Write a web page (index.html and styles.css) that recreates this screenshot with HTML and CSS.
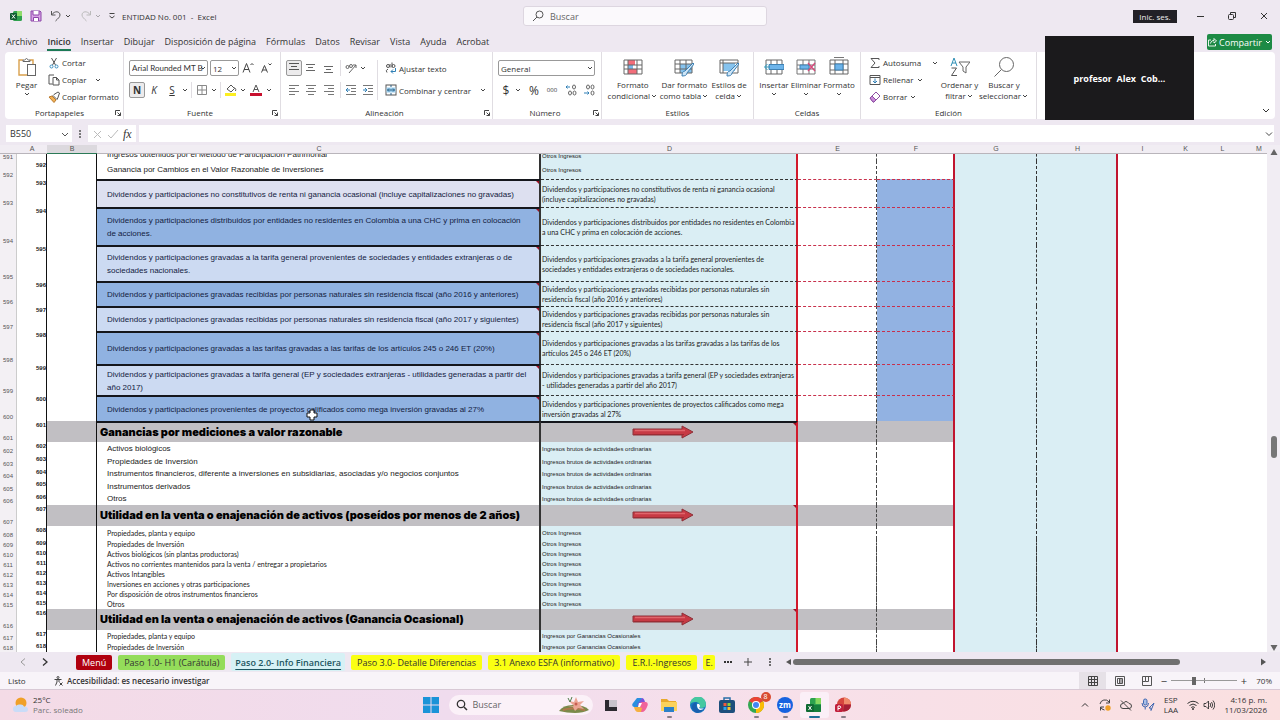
FILE: index.html
```html
<!DOCTYPE html>
<html lang="es">
<head>
<meta charset="utf-8">
<title>ENTIDAD No. 001 - Excel</title>
<link rel="stylesheet" href="styles.css">
</head>
<body>
<svg class="sprite" aria-hidden="true">
  <symbol id="chev" viewBox="0 0 8 8"><path d="M2 3l2 2 2-2" fill="none" stroke="#444" stroke-width="1"/></symbol>
  <symbol id="launch" viewBox="0 0 8 8"><path d="M1.500 6V1.500H6M3.500 3.500l3 3M6.500 3.500v3h-3" fill="none" stroke="#444"/></symbol>
  <symbol id="arrow" viewBox="0 0 62 14"><path d="M1 4h49V1l11 6-11 6v-3H1z" fill="#c73a44" stroke="#8d3038"/><path d="M3 5.500h50" stroke="#e0666c" stroke-width="1.500"/><path d="M2 9.500h50" stroke="#9c2c34"/></symbol>
</svg>

<header class="titlebar">
  <div class="quick">
    <svg class="i12" viewBox="0 0 12 12"><rect x="3" y="1" width="9" height="10" rx="1.500" fill="#2fa14f"/><path d="M7 1h4q1 0 1 1v4H7z" fill="#8fdc6b"/><rect x="0" y="3" width="7" height="7" rx="1" fill="#0f5c30"/><path d="M2 4.500l3 4M5 4.500l-3 4" stroke="#fff"/></svg>
    <button aria-label="Guardar"><svg class="i12" viewBox="0 0 12 12"><path d="M1 1h9l1 1v9H1z" fill="#d9a3e6" stroke="#8b45a8"/><path d="M3 1v4h6V1M3.500 11V7.500h5V11" fill="#fff" stroke="#8b45a8"/></svg></button>
    <button aria-label="Deshacer"><svg class="i12" viewBox="0 0 12 12"><path d="M1.500 1v4h4M1.500 5C5 0 10 1.500 10 5c0 2-2 3.500-4.500 6" fill="none" stroke="#555"/></svg></button>
    <svg class="i8"><use href="#chev"/></svg>
    <button aria-label="Rehacer"><svg class="i12" viewBox="0 0 12 12"><path d="M10.500 1v4h-4M10.500 5C7 0 2 1.500 2 5c0 2 2 3.500 4.500 6" fill="none" stroke="#bbb"/></svg></button>
    <svg class="i8 faded"><use href="#chev"/></svg>
    <svg class="i8" viewBox="0 0 8 8"><path d="M1.500 1.500h5" stroke="#444"/><path d="M1.500 4l2.500 2 2.500-2" fill="none" stroke="#444"/></svg>
    <h1>ENTIDAD No. 001&nbsp; -&nbsp; Excel</h1>
  </div>
  <label class="search"><svg class="i12" viewBox="0 0 12 12"><circle cx="7.500" cy="4.500" r="3.500" fill="none" stroke="#555"/><path d="M5 7L1 11" stroke="#555"/></svg><input type="text" placeholder="Buscar" aria-label="Buscar"></label>
  <div class="winctl">
    <button class="signin">Inic. ses.</button>
    <button aria-label="Minimizar"><svg class="i10" viewBox="0 0 10 10"><path d="M2 5.500h7" stroke="#333"/></svg></button>
    <button aria-label="Restaurar"><svg class="i10" viewBox="0 0 10 10"><rect x="1.500" y="3.500" width="5" height="5" rx="1" fill="none" stroke="#333"/><path d="M3.500 3V1.500h5v5H7" fill="none" stroke="#333"/></svg></button>
    <button aria-label="Cerrar"><svg class="i10" viewBox="0 0 10 10"><path d="M2 2l6 6M8 2l-6 6" stroke="#333"/></svg></button>
  </div>
</header>

<nav class="tabs">
  <button>Archivo</button><button class="on">Inicio</button><button>Insertar</button><button>Dibujar</button><button>Disposición de página</button><button>Fórmulas</button><button>Datos</button><button>Revisar</button><button>Vista</button><button>Ayuda</button><button>Acrobat</button>
  <button class="share"><svg class="i10" viewBox="0 0 10 10"><path d="M4 3H1.500v6h7V7M3.500 6.500C4 4 5.500 3.500 7 3.500V1.500L9.500 4 7 6V4.500" fill="none" stroke="#fff" stroke-width=".9"/></svg>Compartir<svg class="i8" viewBox="0 0 8 8"><path d="M2 3l2 2 2-2" fill="none" stroke="#fff"/></svg></button>
</nav>

<section class="ribbon" aria-label="Cinta de opciones">
  <div class="group g-clip">
    <div class="body">
      <button class="big w44"><svg class="i20" viewBox="0 0 20 20"><path d="M6 3H2v15h8M13 3h3v4" fill="none" stroke="#d9a04c" stroke-width="1.400"/><path d="M6 4.500V3h1.500q2-3 4 0H13v1.500z" fill="#fff" stroke="#666"/><rect x="10.500" y="7.500" width="8" height="11" fill="#fff" stroke="#666"/></svg>Pegar<svg class="i8"><use href="#chev"/></svg></button>
      <div class="stack">
        <button class="cmd"><svg class="i12" viewBox="0 0 12 12"><path d="M3.500 1l4 7M8.500 1l-4 7" stroke="#555" fill="none"/><circle cx="3.500" cy="9.500" r="1.500" fill="none" stroke="#3b8fc0"/><circle cx="8.500" cy="9.500" r="1.500" fill="none" stroke="#3b8fc0"/></svg>Cortar</button>
        <button class="cmd"><svg class="i12" viewBox="0 0 12 12"><path d="M4.500 10H1V1h5" fill="none" stroke="#555"/><path d="M5 3.500h3.500l2.500 2.500v5H5zM8.500 3.500V6H11" fill="#fff" stroke="#555"/></svg>Copiar<svg class="i8 after"><use href="#chev"/></svg></button>
        <button class="cmd"><svg class="i12" viewBox="0 0 12 12"><path d="M1 6l3-1 4 4-2 2.500z" fill="#f0b056" stroke="#b97a2c"/><path d="M5 4.500l4 4 .8-1.500L11.500 2 10 1 6 3.500z" fill="#fff" stroke="#555"/></svg>Copiar formato</button>
      </div>
    </div>
    <div class="glabel"><span>Portapapeles</span><svg class="i8"><use href="#launch"/></svg></div>
  </div>

  <div class="group g-font">
    <div class="body rows">
      <div class="row">
        <span class="pick w82"><select class="face" aria-label="Fuente"><option>Arial Rounded MT B</option></select><svg class="i8"><use href="#chev"/></svg></span>
        <span class="pick w30"><select aria-label="Tamaño"><option>12</option></select><svg class="i8"><use href="#chev"/></svg></span>
        <button class="t w18" aria-label="Aumentar"><svg class="i12" viewBox="0 0 12 12"><path d="M1 10.500l3.500-9 3.500 9M2 7.500h5M8.500 3L10 1.500 11.500 3" fill="none" stroke="#444"/></svg></button>
        <button class="t w18" aria-label="Reducir"><svg class="i12" viewBox="0 0 12 12"><path d="M1.500 10.500l3-7 3 7M2.500 8h4M8.500 1.500L10 3l1.500-1.500" fill="none" stroke="#444"/></svg></button>
      </div>
      <div class="row">
        <button class="t w16 boxed b">N</button><button class="t w18 it">K</button><button class="t w18 un">S</button><svg class="i8"><use href="#chev"/></svg><i class="sep"></i>
        <button class="t w16" aria-label="Bordes"><svg class="i12" viewBox="0 0 12 12"><path d="M1.500 1.500h9v9h-9zM6 1.500v9M1.500 6h9" fill="none" stroke="#888"/></svg></button><svg class="i8"><use href="#chev"/></svg><i class="sep"></i>
        <button class="t w16" aria-label="Relleno"><svg class="i12" viewBox="0 0 12 12"><path d="M2 5l4-4 3.500 3.500L6 8zM9.500 3.500q2 2 1 3.500" fill="none" stroke="#555"/><rect y="9" width="11" height="3" fill="#fcee21"/></svg></button><svg class="i8"><use href="#chev"/></svg>
        <button class="t w18" aria-label="Color de fuente"><svg class="i12" viewBox="0 0 12 12"><path d="M3 8l3-7 3 7M4 5.500h4" fill="none" stroke="#555"/><rect y="9" width="12" height="3" fill="#c8102e"/></svg></button><svg class="i8"><use href="#chev"/></svg>
      </div>
    </div>
    <div class="glabel"><span>Fuente</span><svg class="i8"><use href="#launch"/></svg></div>
  </div>

  <div class="group g-align">
    <div class="body rows split">
      <div class="col">
        <div class="row">
          <button class="t w16 boxed" aria-label="Arriba"><svg class="i12" viewBox="0 0 12 12"><path d="M1 1.500h10M3 4.500h6M1 7.500h10" stroke="#555"/></svg></button><button class="t w18" aria-label="Medio"><svg class="i12" viewBox="0 0 12 12"><path d="M1 2.500h9M3 5.500h5M1 8.500h9" stroke="#666"/></svg></button><button class="t w18" aria-label="Abajo"><svg class="i12" viewBox="0 0 12 12"><path d="M1 4.500h9M3 7.500h5M1 10.500h9" stroke="#666"/></svg></button><i class="sep"></i>
          <button class="t w16" aria-label="Orientación"><svg class="i12" viewBox="0 0 12 12"><path d="M4 11L11 3M8 3h3v3" fill="none" stroke="#666"/><circle cx="2.500" cy="5" r="1.500" fill="none" stroke="#666"/><circle cx="6" cy="4" r="1.500" fill="none" stroke="#666"/></svg></button><svg class="i8"><use href="#chev"/></svg>
        </div>
        <div class="row">
          <button class="t w16" aria-label="Izquierda"><svg class="i12" viewBox="0 0 12 12"><path d="M1 1.500h10M1 4.500h6M1 7.500h10M1 10.500h6" stroke="#777"/></svg></button><button class="t w18" aria-label="Centrar"><svg class="i12" viewBox="0 0 12 12"><path d="M1 1.500h10M3 4.500h6M1 7.500h10M3 10.500h6" stroke="#777"/></svg></button><button class="t w18" aria-label="Derecha"><svg class="i12" viewBox="0 0 12 12"><path d="M1 1.500h10M5 4.500h6M1 7.500h10M5 10.500h6" stroke="#777"/></svg></button><i class="sep"></i>
          <button class="t w16" aria-label="Menos sangría"><svg class="i12" viewBox="0 0 12 12"><path d="M1 1.500h10M6 4.500h5M6 7.500h5M1 10.500h10" stroke="#777"/><path d="M5 6H1M3 4L1 6l2 2" fill="none" stroke="#2f7fb5"/></svg></button><button class="t w18" aria-label="Más sangría"><svg class="i12" viewBox="0 0 12 12"><path d="M1 1.500h10M6 4.500h5M6 7.500h5M1 10.500h10" stroke="#777"/><path d="M1 6h4M3 4l2 2-2 2" fill="none" stroke="#2f7fb5"/></svg></button>
        </div>
      </div>
      <i class="rule"></i>
      <div class="col wide">
        <div class="row"><button class="cmd"><svg class="i12" viewBox="0 0 12 12"><circle cx="3" cy="4" r="1.500" fill="none" stroke="#555"/><path d="M5 2v3.500M7 .5v5M2 10.500q-2-2 1-3.500" fill="none" stroke="#555"/><circle cx="8.500" cy="4" r="1.500" fill="none" stroke="#555"/><path d="M10.500 6v3.500H6M8 7.500l-2 2 2 2" fill="none" stroke="#2f7fb5"/></svg>Ajustar texto</button></div>
        <div class="row"><button class="cmd full"><svg class="i12" viewBox="0 0 12 12"><rect x="1" y="1" width="10" height="10" fill="#fff" stroke="#555"/><rect x="1.500" y="3.500" width="9" height="5" fill="#9fd0ee"/><path d="M6 1v2M6 9v2M2.500 6h7M4 4.500L2.500 6 4 7.500M8 4.500L9.500 6 8 7.500" fill="none" stroke="#2c6287"/></svg>Combinar y centrar<svg class="i8 push"><use href="#chev"/></svg></button></div>
      </div>
    </div>
    <div class="glabel"><span>Alineación</span><svg class="i8"><use href="#launch"/></svg></div>
  </div>

  <div class="group g-num">
    <div class="body rows">
      <div class="row"><span class="pick w97"><select aria-label="Formato de número"><option>General</option></select><svg class="i8"><use href="#chev"/></svg></span></div>
      <div class="row">
        <button class="t w16 cur">$</button><svg class="i8"><use href="#chev"/></svg><button class="t w24 cur">%</button><button class="t w12 mil">000</button><i class="sep"></i>
        <button class="t w18" aria-label="Aumentar decimales"><svg class="i12" viewBox="0 0 12 12"><path d="M5 3H1M2.500 1.500L1 3l1.500 1.500" fill="none" stroke="#2f7fb5"/><ellipse cx="9" cy="3" rx="1.500" ry="2" fill="none" stroke="#666"/><ellipse cx="5" cy="9" rx="1.500" ry="2" fill="none" stroke="#666"/><ellipse cx="9.500" cy="9" rx="1.500" ry="2" fill="none" stroke="#666"/></svg></button><button class="t w18" aria-label="Disminuir decimales"><svg class="i12" viewBox="0 0 12 12"><path d="M1 9h5M4.500 7.500L6 9l-1.500 1.500" fill="none" stroke="#2f7fb5"/><ellipse cx="9.500" cy="9" rx="1.500" ry="2" fill="none" stroke="#666"/><ellipse cx="5" cy="3" rx="1.500" ry="2" fill="none" stroke="#666"/><ellipse cx="9.500" cy="3" rx="1.500" ry="2" fill="none" stroke="#666"/></svg></button>
      </div>
    </div>
    <div class="glabel"><span>Número</span><svg class="i8"><use href="#launch"/></svg></div>
  </div>

  <div class="group g-styles">
    <div class="body">
      <button class="big w52"><svg class="i20" viewBox="0 0 20 20"><rect x="1" y="3" width="18" height="14" fill="#fff"/><path d="M5 3h7v5H5zM5 12h9v5H5z" fill="#f26d7a"/><path d="M5 8h5v4H5z" fill="#7db8ea"/><path d="M1 3h18v14H1zM1 8h18M1 12h18M5 3v14M14 3v14" fill="none" stroke="#666"/></svg>Formato<span>condicional<svg class="i8"><use href="#chev"/></svg></span></button>
      <button class="big w52"><svg class="i20" viewBox="0 0 20 20"><rect x="1" y="3" width="17" height="13" fill="#fff"/><path d="M6 7h12v9H6z" fill="#86c3ee"/><path d="M1 3h17v13H1zM1 7h17M1 12h17M6 3v13M12 3v13" fill="none" stroke="#666"/><path d="M19 6l-8 8q-3 0-3 5 5 0 5-3l7-9z" fill="#cfe6f7" stroke="#3f81b3"/></svg>Dar formato<span>como tabla<svg class="i8"><use href="#chev"/></svg></span></button>
      <button class="big w38"><svg class="i20" viewBox="0 0 20 20"><rect x="1" y="3" width="18" height="13" fill="#fff"/><path d="M4 6h12v8H4z" fill="#86c3ee"/><path d="M1 3h18v13H1zM1 6h18M4 3v13" fill="none" stroke="#666"/><path d="M19 6l-8 8q-3 0-3 5 5 0 5-3l7-9z" fill="#cfe6f7" stroke="#3f81b3"/></svg>Estilos de<span>celda<svg class="i8"><use href="#chev"/></svg></span></button>
    </div>
    <div class="glabel"><span>Estilos</span></div>
  </div>

  <div class="group g-cells">
    <div class="body">
      <button class="big w32"><svg class="i20" viewBox="0 0 20 20"><path d="M2 3h16v14H2zM7 3v14M13 3v14" fill="#fff" stroke="#666"/><path d="M5 7.500h15v5H5z" fill="#6db4ea" stroke="#3f81b3"/><path d="M6 10H1M3.500 7L.5 10l3 3" fill="none" stroke="#2f9bc0"/></svg>Insertar<svg class="i8"><use href="#chev"/></svg></button>
      <button class="big w32"><svg class="i20" viewBox="0 0 20 20"><path d="M1 3h18v14H1zM7 3v14M13 3v14M1 8h18M1 12h18" fill="#fff" stroke="#777"/><path d="M4 8h9v4H4z" fill="#6db4ea" stroke="#3f81b3"/><path d="M12 6l7 8M19 6l-7 8" stroke="#d6477a" stroke-width="1.300"/></svg>Eliminar<svg class="i8"><use href="#chev"/></svg></button>
      <button class="big w34"><svg class="i20" viewBox="0 0 20 20"><path d="M5 .5h10" stroke="#777"/><path d="M1 3h18v14H1zM6 3v14M14 3v14M1 7h18M1 13h18" fill="#fff" stroke="#666"/><path d="M6 7h8v6H6z" fill="#6db4ea" stroke="#3f81b3"/></svg>Formato<svg class="i8"><use href="#chev"/></svg></button>
    </div>
    <div class="glabel"><span>Celdas</span></div>
  </div>

  <div class="group g-edit">
    <div class="body">
      <div class="stack">
        <button class="cmd"><svg class="i12" viewBox="0 0 12 12"><path d="M10 3V1.500H2L6 6l-4 4.500h8V9" fill="none" stroke="#555"/></svg>Autosuma<svg class="i8 push"><use href="#chev"/></svg></button>
        <button class="cmd"><svg class="i12" viewBox="0 0 12 12"><path d="M1 1.500h10v9H1zM1 3.500h10" fill="#fff" stroke="#555"/><path d="M6 4.500v4.500M4 7l2 2 2-2" fill="none" stroke="#2f7fb5"/></svg>Rellenar<svg class="i8"><use href="#chev"/></svg></button>
        <button class="cmd"><svg class="i12" viewBox="0 0 12 12"><path d="M1 7l6-6 4 4-6 6H4z" fill="#fff" stroke="#8e4fa3"/><path d="M1 7l2-2 4 4-2 2H4z" fill="#c98ad8" stroke="#8e4fa3"/></svg>Borrar<svg class="i8"><use href="#chev"/></svg></button>
      </div>
      <button class="big w44"><svg class="i20" viewBox="0 0 20 20"><path d="M1 9l3-8 3 8M2 6h4" fill="none" stroke="#2f8fb5"/><path d="M1.500 11h5l-5 7.500h5.500" fill="none" stroke="#555"/><path d="M9 5h11l-4 5v6l-3-2v-4z" fill="none" stroke="#666"/></svg>Ordenar y<span>filtrar<svg class="i8"><use href="#chev"/></svg></span></button>
      <button class="big w48"><svg class="i20" viewBox="0 0 20 20"><circle cx="12.500" cy="7.500" r="7" fill="none" stroke="#666"/><path d="M7.500 12.500L.5 19.500" stroke="#666"/></svg>Buscar y<span>seleccionar<svg class="i8"><use href="#chev"/></svg></span></button>
    </div>
    <div class="glabel"><span>Edición</span></div>
  </div>
  <button class="collapse" aria-label="Contraer"><svg class="i10" viewBox="0 0 10 10"><path d="M2 4l3 3 3-3" fill="none" stroke="#333"/></svg></button>
</section>

<section class="formula">
  <span class="namebox"><input type="text" value="B550" aria-label="Cuadro de nombres"><svg class="i10" viewBox="0 0 10 10"><path d="M2 4l3 3 3-3" fill="none" stroke="#555"/></svg></span>
  <svg class="i10" viewBox="0 0 10 10"><path d="M5 1v2M5 4v2M5 7v2" stroke="#555" stroke-width="1.500"/></svg>
  <span class="fx"><svg class="i10" viewBox="0 0 10 10"><path d="M2 2l7 7M9 2L2 9" stroke="#bbb"/></svg><svg class="i12" viewBox="0 0 12 12"><path d="M1 7l3 3 7-8" fill="none" stroke="#bbb"/></svg><em>fx</em></span>
  <input class="bar" type="text" aria-label="Barra de fórmulas">
  <svg class="i10 end" viewBox="0 0 10 10"><path d="M2 4l3 3 3-3" fill="none" stroke="#444"/></svg>
</section>

<main class="sheet">
<div class="cells">
<table>
<colgroup><col class="c-n"><col class="c-a"><col class="c-b"><col class="c-c"><col class="c-d"><col class="c-e"><col class="c-f"><col class="c-g"><col class="c-h"><col class="c-i"><col class="c-k"><col class="c-l"><col></colgroup>
<thead><tr><th></th><th>A</th><th class="sel">B</th><th>C</th><th>D</th><th>E</th><th>F</th><th>G</th><th>H</th><th>I</th><th>K</th><th>L</th><th class="m">M</th></tr></thead>
<tbody>
<tr class="h7"><th>591<td><td><td><div class="cut">Ingresos obtenidos por el Método de Participación Patrimonial</div><td><div class="cut">Otros Ingresos</div><td><td><td><td><td colspan="4">
<tr class="h18"><th>592<td>592<td><td>Ganancia por Cambios en el Valor Razonable de Inversiones<td>Otros Ingresos<td><td><td><td><td colspan="4">
<tr class="div pale h28"><th>593<td>593<td><td>Dividendos y participaciones no constitutivos de renta ni ganancia ocasional (incluye capitalizaciones no gravadas)<td>Dividendos y participaciones no constitutivos de renta ni ganancia ocasional<br>(incluye capitalizaciones no gravadas)<td><td><td><td><td colspan="4">
<tr class="div blue h38"><th>594<td>594<td><td>Dividendos y participaciones distribuidos por entidades no residentes en Colombia a una CHC y prima en colocación<br>de acciones.<td>Dividendos y participaciones distribuidos por entidades no residentes en Colombia<br>a una CHC y prima en colocación de acciones.<td><td><td><td><td colspan="4">
<tr class="div light h36"><th>595<td>595<td><td>Dividendos y participaciones gravadas a la tarifa general provenientes de sociedades y entidades extranjeras o de<br>sociedades nacionales.<td>Dividendos y participaciones gravadas a la tarifa general provenientes de<br>sociedades y entidades extranjeras o de sociedades nacionales.<td><td><td><td><td colspan="4">
<tr class="div blue h25"><th>596<td>596<td><td>Dividendos y participaciones gravadas recibidas por personas naturales sin residencia fiscal (año 2016 y anteriores)<td>Dividendos y participaciones gravadas recibidas por personas naturales sin<br>residencia fiscal (año 2016 y anteriores)<td><td><td><td><td colspan="4">
<tr class="div light h25"><th>597<td>597<td><td>Dividendos y participaciones gravadas recibidas por personas naturales sin residencia fiscal (año 2017 y siguientes)<td>Dividendos y participaciones gravadas recibidas por personas naturales sin<br>residencia fiscal (año 2017 y siguientes)<td><td><td><td><td colspan="4">
<tr class="div blue h33"><th>598<td>598<td><td>Dividendos y participaciones gravadas a las tarifas gravadas a las tarifas de los artículos 245 o 246 ET (20%)<td>Dividendos y participaciones gravadas a las tarifas gravadas a las tarifas de los<br>artículos 245 o 246 ET (20%)<td><td><td><td><td colspan="4">
<tr class="div light h31"><th>599<td>599<td><td>Dividendos y participaciones gravadas a tarifa general (EP y sociedades extranjeras - utilidades generadas a partir del<br>año 2017)<td>Dividendos y participaciones gravadas a tarifa general (EP y sociedades extranjeras<br>- utilidades generadas a partir del año 2017)<td><td><td><td><td colspan="4">
<tr class="div blue h26"><th>600<td>600<td><td>Dividendos y participaciones provenientes de proyectos calificados como mega inversión gravadas al 27%<td>Dividendos y participaciones provenientes de proyectos calificados como mega<br>inversión gravadas al 27%<td><td><td><td><td colspan="4">
<tr class="head first h21"><th>601<td>601<td><td>Ganancias por mediciones a valor razonable<td><svg class="arrow"><use href="#arrow"/></svg><td><td><td><td><td colspan="4">
<tr class="h13"><th>602<td>602<td><td>Activos biológicos<td>Ingresos brutos de actividades ordinarias<td><td><td><td><td colspan="4">
<tr class="h13"><th>603<td>603<td><td>Propiedades de Inversión<td>Ingresos brutos de actividades ordinarias<td><td><td><td><td colspan="4">
<tr class="h12"><th>604<td>604<td><td>Instrumentos financieros, diferente a inversiones en subsidiarias, asociadas y/o negocios conjuntos<td>Ingresos brutos de actividades ordinarias<td><td><td><td><td colspan="4">
<tr class="h13"><th>605<td>605<td><td>Instrumentos derivados<td>Ingresos brutos de actividades ordinarias<td><td><td><td><td colspan="4">
<tr class="h12"><th>606<td>606<td><td>Otros<td>Ingresos brutos de actividades ordinarias<td><td><td><td><td colspan="4">
<tr class="head h21"><th>607<td>607<td><td>Utilidad en la venta o enajenación de activos (poseídos por menos de 2 años)<td><svg class="arrow"><use href="#arrow"/></svg><td><td><td><td><td colspan="4">
<tr class="small h13"><th>608<td>608<td><td>Propiedades, planta y equipo<td>Otros Ingresos<td><td><td><td><td colspan="4">
<tr class="small h10"><th>609<td>609<td><td>Propiedades de Inversión<td>Otros Ingresos<td><td><td><td><td colspan="4">
<tr class="small h10"><th>610<td>610<td><td>Activos biológicos (sin plantas productoras)<td>Otros Ingresos<td><td><td><td><td colspan="4">
<tr class="small h10"><th>611<td>611<td><td>Activos no corrientes mantenidos para la venta / entregar a propietarios<td>Otros Ingresos<td><td><td><td><td colspan="4">
<tr class="small h10"><th>612<td>612<td><td>Activos Intangibles<td>Otros Ingresos<td><td><td><td><td colspan="4">
<tr class="small h10"><th>613<td>613<td><td>Inversiones en acciones y otras participaciones<td>Otros Ingresos<td><td><td><td><td colspan="4">
<tr class="small h10"><th>614<td>614<td><td>Por disposición de otros instrumentos financieros<td>Otros Ingresos<td><td><td><td><td colspan="4">
<tr class="small h10"><th>615<td>615<td><td>Otros<td>Otros Ingresos<td><td><td><td><td colspan="4">
<tr class="head h21"><th>616<td>616<td><td>Utilidad en la venta o enajenación de activos (Ganancia Ocasional)<td><svg class="arrow"><use href="#arrow"/></svg><td><td><td><td><td colspan="4">
<tr class="small h12"><th>617<td>617<td><td>Propiedades, planta y equipo<td>Ingresos por Ganancias Ocasionales<td><td><td><td><td colspan="4">
<tr class="small h10"><th>618<td>618<td><td>Propiedades de Inversión<td>Ingresos por Ganancias Ocasionales<td><td><td><td><td colspan="4">
</tbody>
</table>
</div>
<div class="vscroll">
  <svg class="i8" viewBox="0 0 8 8"><path d="M4 1l3.500 6h-7z" fill="#666"/></svg>
  <div class="track"><span></span></div>
  <svg class="i8" viewBox="0 0 8 8"><path d="M4 7L.5 1h7z" fill="#666"/></svg>
</div>
</main>

<section class="sheets">
  <button class="nav" aria-label="Anterior"><svg class="i10" viewBox="0 0 10 10"><path d="M7 1.500L3 5l4 3.500" fill="none" stroke="#999"/></svg></button>
  <button class="nav next" aria-label="Siguiente"><svg class="i10" viewBox="0 0 10 10"><path d="M3 1.500L7 5 3 8.500" fill="none" stroke="#333" stroke-width="1.300"/></svg></button>
  <button class="st red">Menú</button>
  <button class="st green">Paso 1.0- H1 (Carátula)</button>
  <button class="st cur-tab">Paso 2.0- Info Financiera</button>
  <button class="st yel">Paso 3.0- Detalle Diferencias</button>
  <button class="st yel">3.1 Anexo ESFA (informativo)</button>
  <button class="st yel">E.R.I.-Ingresos</button>
  <button class="st yel cropped">E.</button>
  <button class="nav" aria-label="Más hojas"><svg class="i10" viewBox="0 0 10 10"><path d="M1 5h2M4 5h2M7 5h2" stroke="#333" stroke-width="2"/></svg></button>
  <button class="nav" aria-label="Hoja nueva"><svg class="i10" viewBox="0 0 10 10"><path d="M1 5h8M5 1v8" stroke="#444"/></svg></button>
  <svg class="i10 dots" viewBox="0 0 10 10"><path d="M5 1v2M5 4v2M5 7v2" stroke="#444" stroke-width="1.500"/></svg>
  <div class="hscroll"><svg class="i8" viewBox="0 0 8 8"><path d="M1 4l5-3v6z" fill="#555"/></svg><div class="htrack"><span></span></div><svg class="i8" viewBox="0 0 8 8"><path d="M7 4L2 .5v7z" fill="#555"/></svg></div>
</section>

<footer class="status">
  <span class="ready">Listo</span>
  <svg class="i10" viewBox="0 0 10 10"><circle cx="4" cy="1.500" r="1" fill="none" stroke="#444"/><path d="M.5 3.500h7M3 4v2L1.500 9.500M5 4v2M5.500 6.500l3 3M8.500 6.500l-3 3" fill="none" stroke="#444"/></svg>
  <strong>Accesibilidad: es necesario investigar</strong>
  <div class="views">
    <button class="active" aria-label="Normal"><svg class="i10" viewBox="0 0 10 10"><path d="M.5.5h9v9h-9zM.5 3.500h9M.5 6.500h9M3.500.5v9M6.500.5v9" fill="none" stroke="#444"/></svg></button>
    <button aria-label="Diseño de página"><svg class="i10" viewBox="0 0 10 10"><path d="M.5.5h9v9h-9zM2.500 2.500h5v5h-5zM4.500 3v4M6 3v4" fill="none" stroke="#555"/></svg></button>
    <button aria-label="Saltos de página"><svg class="i10" viewBox="0 0 10 10"><path d="M.5.5h9v9h-9zM3.500.5v5h3v-5M.5 5.500h3" fill="none" stroke="#555"/></svg></button>
  </div>
  <div class="zoom"><button aria-label="Alejar">−</button><input type="range" min="10" max="190" value="70" aria-label="Zoom"><button aria-label="Acercar">+</button><span>70%</span></div>
</footer>

<section class="taskbar">
  <div class="weather">
    <svg class="i16" viewBox="0 0 16 16"><circle cx="8" cy="6" r="5.500" fill="#f0a028"/><path d="M3 15a3 3 0 0 1 0-6q1-2 4-1.500 3-.5 4 2 4 0 4 3 0 2.500-3 2.500z" fill="#c9dcf8"/></svg>
    <p>25°C<br><span>Parc. soleado</span></p>
  </div>
  <div class="apps">
    <button aria-label="Inicio"><svg class="i16" viewBox="0 0 16 16"><path d="M0 0h7.500v7.500H0zM8.500 0H16v7.500H8.500zM0 8.500h7.500V16H0zM8.500 8.500H16V16H8.500z" fill="#1a93d8"/></svg></button>
    <label class="tsearch"><svg class="i12" viewBox="0 0 12 12"><circle cx="5" cy="5" r="3.700" fill="none" stroke="#333" stroke-width="1.300"/><path d="M8 8l3 3" stroke="#333" stroke-width="1.500"/></svg><input type="text" placeholder="Buscar" aria-label="Buscar en Windows"><svg class="flower" viewBox="0 0 30 16"><path d="M0 14q4-6 14-6 12 0 16 5-6 3-14 3T0 14z" fill="#7a8a4a"/><path d="M4 13q8-3 22 0" stroke="#b0784a" stroke-width="2" fill="none"/><path d="M15 9L10 4l5 1 2-5 2 5 6-1-4 4 4 4-6-1-3 3-2-4-5 0z" fill="#eba594"/><circle cx="17" cy="7" r="1.500" fill="#c75d50"/><path d="M9 1l2 4M13 0l-2 5" stroke="#4f7a4a"/></svg></label>
    <button class="app" aria-label="Vista de tareas"><svg class="i16" viewBox="0 0 16 16"><path d="M5 3h9v8H5z" fill="#c9c3cc"/><path d="M2 3h4v7h8v4H2z" fill="#2c2930"/></svg></button>
    <button class="app" aria-label="Copilot"><svg class="i16" viewBox="0 0 16 16"><path d="M5 1h5l-3 9H2q-3-1-1-4z" fill="#2a8fe0"/><path d="M10 1q2 0 3 4h-4L7 10 5 8z" fill="#7b52d8"/><path d="M9 5h5q3 1 1 5-2 5-5 5H6z" fill="#f0639a"/><path d="M2 10h5l3 1-1 4H6q-3 0-4-5z" fill="#f5b041"/><path d="M7 6h3l-2 4H6z" fill="#fff"/></svg></button>
    <button class="app run" aria-label="Explorador"><svg class="i16" viewBox="0 0 16 16"><path d="M0 2h6l2 2h7v10H0z" fill="#e9a92c"/><path d="M0 5h16v9H0z" fill="#fbd25b"/><path d="M3 10h10v5H3z" fill="#2c80c8"/></svg></button>
    <button class="app" aria-label="Edge"><svg class="i16" viewBox="0 0 16 16"><circle cx="8" cy="8" r="8" fill="#1577c0"/><path d="M0 8a8 8 0 0 1 16-1q0 4-5 4-2 0-1-2 0-4-5-4Q1 5 0 8z" fill="#46c8a0"/><path d="M6 8q0 5 7 5-3 3-6 3-5-2-5-6 0-4 5-5-1 1-1 3z" fill="#1a5fae"/><path d="M7 8q0-2 2-1 2 2 0 4 3 1 5 0-1 2-4 2-3-1-3-5z" fill="#fff"/></svg></button>
    <button class="app" aria-label="Tienda"><svg class="i16" viewBox="0 0 16 16"><path d="M5 4V1h6v3" fill="none" stroke="#2a6fa8" stroke-width="1.500"/><rect y="3" width="16" height="13" rx="2" fill="#1d4f7c"/><path d="M4.500 6h3v3h-3z" fill="#f05a3c"/><path d="M8.500 6h3v3h-3z" fill="#8ccf3c"/><path d="M4.500 10h3v3h-3z" fill="#2aa8f0"/><path d="M8.500 10h3v3h-3z" fill="#fbc02d"/></svg></button>
    <button class="app run chrome" aria-label="Chrome"><svg class="i16" viewBox="0 0 16 16"><circle cx="8" cy="8" r="8" fill="#34a853"/><path d="M8 8l7-4a8 8 0 0 1-7 12z" fill="#fbbc05"/><path d="M1 4a8 8 0 0 1 14 0L8 8z" fill="#ea4335"/><circle cx="8" cy="8" r="4" fill="#fff"/><circle cx="8" cy="8" r="3" fill="#4285f4"/></svg><b>8</b></button>
    <button class="app run" aria-label="Zoom"><span class="zm">zm</span></button>
    <button class="app run live" aria-label="Excel"><svg class="i16" viewBox="0 0 16 16"><rect x="4" y="1" width="11" height="14" rx="1.500" fill="#2ba14e"/><path d="M9.500 1H14q1 0 1 1v5H9.500z" fill="#85d85f"/><path d="M4 8h11v6q0 1-1 1H5z" fill="#15803c"/><rect y="7" width="8" height="8" rx="1" fill="#0f6b34"/><path d="M2.500 9l3 4M5.500 9l-3 4" stroke="#fff"/></svg></button>
    <button class="app run" aria-label="PowerPoint"><svg class="i16" viewBox="0 0 16 16"><circle cx="9" cy="7.500" r="7" fill="#d6453d"/><path d="M9 .5a7 7 0 0 1 7 7H9z" fill="#f08a6a"/><path d="M9 7.500h7a7 7 0 0 1-8 7z" fill="#a61e35"/><rect y="7" width="8" height="8" rx="1.500" fill="#c1203c"/><path d="M3 13.500V9h2q1.500 1.200 0 2.500H3" fill="none" stroke="#fff"/></svg></button>
  </div>
  <div class="tray">
    <svg class="i10" viewBox="0 0 10 10"><path d="M2 6.500l3-3 3 3" fill="none" stroke="#333"/></svg>
    <svg class="i12" viewBox="0 0 12 12"><path d="M1 5a5 5 0 0 1 9-2M10.500.5V4H7M1.500 11.500V8H5M1.500 8q1 2.500 4 3" fill="none" stroke="#444"/><circle cx="9" cy="9" r="2.700" fill="#f0a028"/></svg>
    <svg class="i12" viewBox="0 0 12 12"><path d="M3 9.500a2.500 2.500 0 0 1 0-5q3-4 6 0a2.500 2.500 0 0 1 0 5zM1 1.500l10 10" fill="none" stroke="#444"/></svg>
    <svg class="i14" viewBox="0 0 14 14"><rect x="2.500" y="1" width="3.500" height="6" rx="1.700" fill="#a9bfe8" stroke="#3f66b0"/><path d="M1 5q0 4 3.200 4T7.500 5M4.200 9v2.500M13 5l-5 5h2v2.500z" fill="none" stroke="#3f66b0"/></svg>
    <p class="lang">ESP<br>LAA</p>
    <svg class="i12" viewBox="0 0 12 12"><path d="M.5 4.500q5.500-4.500 11 0M2.500 6.500q3.500-3 7 0M4.200 8.500q1.800-1.500 3.600 0" fill="none" stroke="#333"/><circle cx="6" cy="10" r="1" fill="#333"/></svg>
    <svg class="i12" viewBox="0 0 12 12"><path d="M1 4.500h2L5.500 2v8L3 7.500H1zM7 4q1.500 2 0 4M8.500 3q2.500 3 0 6M10 1.500q3.500 4.500 0 9" fill="none" stroke="#333" stroke-width=".9"/></svg>
    <p class="clock">4:16 p. m.<br>11/03/2026</p>
  </div>
</section>

<aside class="caller">profesor&nbsp; Alex&nbsp; Cob...</aside>
<svg class="cursor" viewBox="0 0 12 12"><path d="M4 1h4v3h3v4H8v3H4V8H1V4h3z" fill="#fff" stroke="#111"/></svg>
</body>
</html>
```
FILE: styles.css
```css
* { box-sizing: border-box; }
body {
  margin: 0; height: 100vh; display: flex; flex-direction: column; overflow: hidden;
  background: #eee8f1; color: #333;
  font-family: "Open Sans", "Noto Sans", sans-serif; font-size: 8px; line-height: 11px;
}
button, input, select { font: inherit; color: inherit; border: 0; background: none; padding: 0; margin: 0; outline: 0; }
button { display: flex; align-items: center; justify-content: center; white-space: nowrap; }
p { margin: 0; }
svg { display: block; flex: none; }
.sprite { width: 0; height: 0; position: absolute; }
.i8 { width: 8px; height: 8px; }
.i10 { width: 10px; height: 10px; }
.i12 { width: 12px; height: 12px; }
.i14 { width: 14px; height: 14px; }
.i16 { width: 16px; height: 16px; }
.i20 { width: 20px; height: 20px; }
.faded { opacity: .4; }
.push { margin-left: auto; }
.after { margin-left: 6px; }

.titlebar { flex: none; height: 32px; padding-left: 10px; display: grid; grid-template-columns: 1fr 244px 1fr; align-items: center; }
.quick { display: flex; align-items: center; }
.quick button { width: 12px; margin-left: 8px; }
.quick .i8 { margin-left: 2px; }
.quick .i8 + .i8 { margin-left: 6px; }
.quick h1 { margin: 0 0 0 6px; font-size: 8px; font-weight: 400; }
.search { display: flex; align-items: center; gap: 6px; height: 20px; padding-left: 8px; background: #fbf9fc; border: 1px solid #ddd6e0; border-radius: 3px; font-size: 9px; }
.search input { flex: 1; min-width: 0; }
::placeholder { color: #666; opacity: 1; }
.winctl { display: flex; justify-content: flex-end; align-items: center; gap: 22px; padding-right: 11px; }
.signin { width: 44px; height: 13px; background: #222026; color: #eee; }
.winctl .signin { margin-right: -4px; }

.tabs { flex: none; height: 20px; display: flex; align-items: center; gap: 10px; padding: 0 8px 0 6px; font-size: 9px; }
.tabs button { height: 17px; border-bottom: 2px solid transparent; }
.tabs .on { font-weight: 600; border-color: #1c7a55; }
.tabs .share { margin-left: auto; height: 16px; width: 65px; gap: 2px; border: 0; border-radius: 2px; background: #1d8a45; color: #fff; }

.ribbon { flex: none; height: 67px; margin: 0 5px; background: #fff; display: flex; border-radius: 4px; }
.group { flex: none; display: flex; flex-direction: column; padding: 0 5px; border-right: 1px solid #e0dde2; margin: 0; }
.g-clip { width: 119px; padding-left: 0; }
.g-font { width: 157px; }
.g-align { width: 212px; }
.g-num { width: 109px; }
.g-styles { width: 152px; }
.g-cells { width: 107px; padding: 0 4px; }
.g-edit { width: 176px; padding: 0 8px; }
.body { height: 53px; display: flex; padding-top: 2px; }
.body.rows { flex-direction: column; gap: 6px; padding-top: 8px; }
.body.split { flex-direction: row; gap: 0; }
.col { display: flex; flex-direction: column; gap: 6px; width: 91px; }
.col.wide { flex: 1; width: auto; padding-left: 7px; }
.rule { width: 1px; height: 40px; background: #e0dde2; }
.row { display: flex; align-items: center; height: 16px; gap: 0; }
.sep { width: 1px; height: 16px; margin: 0 2px; background: #e0dde2; }
.glabel { height: 14px; display: flex; align-items: center; padding-top: 1px; }
.glabel span { flex: 1; text-align: center; }
.glabel svg { margin-right: -4px; }
.stack { display: flex; flex-direction: column; min-width: 70px; }
.stack .cmd { height: 17px; }
.cmd { gap: 2px; justify-content: flex-start; }
.cmd.full { width: 100%; }
.big { flex-direction: column; justify-content: flex-start; padding-top: 3px; }
.big .i20 { margin-bottom: 2px; }
.big span { display: flex; align-items: center; }
.w12 { width: 12px; } .w16 { width: 16px; } .w18 { width: 18px; } .w24 { width: 24px; }
.w30 { width: 30px; } .w32 { width: 32px; } .w34 { width: 34px; } .w38 { width: 38px; }
.w44 { width: 44px; } .w48 { width: 48px; } .w52 { width: 52px; } .w82 { width: 82px; } .w97 { width: 97px; }
.t { height: 16px; flex: none; font-size: 10px; }
.boxed { border: 1px solid #999; border-radius: 2px; background: #ecebec; }
.b { font-weight: 700; } .it { font-style: italic; } .un { text-decoration: underline; }
.cur { font-size: 12px; } .mil { font-size: 6px; }
.pick { display: grid; height: 16px; border: 1px solid #999; border-radius: 2px; align-items: center; }
.pick + .pick { margin-left: 2px; }
.pick select, .pick svg { grid-area: 1 / 1; }
.pick select { appearance: none; padding-left: 2px; width: 100%; height: 14px; }
.pick .face { font-family: Lato, sans-serif; }
.pick svg { justify-self: end; pointer-events: none; }
.collapse { margin: auto 4px 4px auto; }

.formula { flex: none; height: 17px; margin: 6px 6px 3px; display: flex; align-items: center; font-size: 9px; }
.namebox { width: 66px; height: 17px; display: flex; align-items: center; background: #fff; padding: 0 2px 0 4px; }
.namebox input { flex: 1; min-width: 0; }
.formula > .i10 { margin: 0 3px; }
.fx { width: 48px; height: 17px; display: flex; align-items: center; justify-content: space-evenly; background: #fff; }
.fx em { font: italic 400 12px/16px "Liberation Serif", serif; }
.bar { flex: 1; height: 17px; margin-left: 3px; background: #fff; }
.formula > .end { margin: 0; height: 17px; background: #fff; }

.sheet { flex: 1; min-height: 0; display: flex; }
.cells { flex: 1; min-width: 0; overflow: hidden; background: #fff; }
table { width: 100%; table-layout: fixed; border-collapse: separate; border-spacing: 0; color: #222; font-family: "Liberation Sans", sans-serif; }
.c-n { width: 17px; } .c-a { width: 30px; } .c-b { width: 50px; } .c-c { width: 444px; } .c-d { width: 257px; }
.c-e { width: 79px; } .c-f { width: 78px; } .c-g { width: 82px; } .c-h { width: 81px; } .c-i { width: 49px; } .c-k { width: 37px; } .c-l { width: 37px; }
th, td { padding: 0; overflow: hidden; white-space: nowrap; text-align: left; }
thead th { height: 9px; font: 400 7px/8px "Liberation Sans", sans-serif; text-align: center; background: #f1edf3; border-bottom: 1px solid #b9b5bb; color: #555; }
thead .sel { background: #dcd9de; border-color: #2b7a57; }
thead .m { padding-left: 10px; }
tbody th { background: #f3f0f4; border-right: 1px solid #ccc; font: 400 6px/8px "Liberation Sans", sans-serif; color: #555; text-align: center; vertical-align: bottom; }
td:nth-child(2) { font: 700 6px/8px "Liberation Sans", sans-serif; text-align: right; vertical-align: top; border-right: 1px solid #111; }
td:nth-child(3) { border-right: 1px solid #111; }
td:nth-child(4) { padding-left: 10px; font-size: 8px; line-height: 12px; border-right: 2px solid #333; }
td:nth-child(5) { padding-left: 1px; font-size: 6px; line-height: 10px; background: #daeef4; border-right: 2px solid #d11a2c; }
td:nth-child(6) { border-right: 1px dashed #444; }
td:nth-child(7) { border-right: 2px solid #c0152f; }
td:nth-child(8) { background: #daeef4; border-right: 1px dashed #333; }
td:nth-child(9) { background: #daeef4; border-right: 2px solid #c0152f; }
.h7 { height: 7px; } .h10 { height: 10px; } .h12 { height: 12px; } .h13 { height: 13px; } .h18 { height: 18px; }
.h21 { height: 21px; } .h25 { height: 25px; } .h26 { height: 26px; } .h28 { height: 28px; } .h31 { height: 31px; }
.h33 { height: 33px; } .h36 { height: 36px; } .h38 { height: 38px; }
.h7 th { line-height: 7px; }
.cut { height: 7px; display: flex; align-items: flex-end; overflow: hidden; }
.div td:nth-child(4) { border-top: 2px solid #14161c; color: #13213f; line-height: 13px; }
.div td:nth-child(5) { border-top: 1px dashed #333; font: 400 7px/10px Lato, sans-serif; }
.div td:nth-child(6) { border-top: 1px dashed #c8304c; }
.div td:nth-child(7) { border-top: 1px dashed #c8304c; background: #92b2e2; }
.pale td:nth-child(4) { background: #dde0f0; }
.blue td:nth-child(4) { background: #90b2e1; }
.light td:nth-child(4) { background: #ccdaf2; }
.head td:nth-child(n+3):nth-child(-n+7) { background: #c1bfc3; }
.head td:nth-child(4) { padding: 0 0 2px 3px; font: 900 11px/14px Inter, "Liberation Sans", sans-serif; color: #000; }
.head td:nth-child(5) { padding: 0 0 2px 91px; }
.first td:nth-child(4), .first td:nth-child(5) { border-top: 2px solid #14161c; }
.small td:nth-child(4) { font: 400 7px/10px Lato, sans-serif; }
/* comment markers in the cell corner */
.div td:nth-child(4), .head td:nth-child(5) { position: relative; }
.div td:nth-child(4)::after, .head td:nth-child(5)::after { content: ""; position: absolute; right: 0; top: 0; border: solid transparent; border-width: 0 0 3px 3px; border-right: 0; border-top: 3px solid #9c1024; border-bottom: 0; }
.arrow { width: 62px; height: 14px; }
.vscroll { width: 13px; display: flex; flex-direction: column; align-items: center; padding: 3px 0 0; background: #f1edf3; }
.track { flex: 1; }
.track span { display: block; width: 6px; height: 22px; margin-top: 280px; border-radius: 3px; background: #777; }

.sheets { flex: none; height: 20px; display: flex; align-items: center; gap: 6px; padding: 0 13px 0 16px; font-size: 9px; }
.nav { width: 14px; }
.sheets .next { margin: 0 18px 0 2px; }
.dots { margin: 0 4px; }
.st { height: 15px; padding: 0 6px; border-radius: 2px; }
.red { background: #b0000f; color: #fff; }
.green { background: #94dc5a; }
.yel { background: #faff12; }
.cur-tab { height: 18px; padding: 0 4px; background: #d6f1f5; color: #1d5560; font-weight: 600; text-decoration: underline; text-underline-offset: 3px; }
.cropped { width: 12px; overflow: hidden; }
.hscroll { flex: 1; display: flex; align-items: center; }
.htrack { flex: 1; }
.htrack span { display: block; width: 83%; height: 6px; border-radius: 3px; background: #707070; }

.status { flex: none; height: 17px; display: flex; align-items: center; background: #f8f4f9; padding: 0 8px; }
.ready { width: 46px; }
.status strong { margin-left: 3px; font-weight: 600; }
.views { margin-left: auto; display: flex; }
.views button { width: 27px; height: 17px; }
.views .active { background: #e6e1e7; }
.zoom { display: flex; align-items: center; gap: 3px; }
.zoom button { width: 8px; font-size: 11px; }
.zoom span { width: 21px; text-align: right; }
.zoom input { appearance: none; width: 66px; height: 10px; background: linear-gradient(#999, #999) center / 100% 1px no-repeat, linear-gradient(#777, #777) center / 1px 5px no-repeat; }
.zoom input::-webkit-slider-thumb { appearance: none; width: 4px; height: 8px; background: #666; }

.taskbar { flex: none; height: 31px; display: grid; grid-template-columns: 1fr auto 1fr; align-items: center; padding: 0 13px; border-top: 1px solid #d8c9d5; background: linear-gradient(90deg, #f4dbe6, #f0dcee 35%, #f7e0ea 60%, #fae0e0); line-height: 10px; }
.weather { display: flex; gap: 4px; align-items: center; }
.weather span { color: #777; }
.apps { display: flex; align-items: center; height: 30px; }
.tsearch { width: 144px; height: 20px; margin: 0 4px 0 10px; padding: 0 4px 0 7px; display: flex; align-items: center; gap: 5px; background: #fbf1f8; border-radius: 10px; font-size: 9px; }
.tsearch input { flex: 1; min-width: 0; }
.flower { width: 30px; height: 16px; }
.app { position: relative; width: 29px; height: 26px; }
.run::after { content: ""; position: absolute; bottom: 0; left: 12px; width: 5px; height: 2px; border-radius: 1px; background: #887f88; }
.live { background: #fbeff7; border-radius: 3px; }
.live::after { left: 9px; width: 11px; background: #1c7098; }
.chrome b { position: absolute; right: 0; top: 0; width: 10px; height: 10px; border-radius: 5px; background: #d94a30; color: #fff; font-size: 7px; font-weight: 400; text-align: center; }
.zm { width: 16px; height: 16px; border-radius: 8px; background: #1763e0; color: #fff; font-weight: 700; line-height: 15px; text-align: center; }
.tray { display: flex; align-items: center; justify-content: flex-end; gap: 9px; }
.lang { text-align: center; }
.tray .lang + svg { margin-right: -5px; }
.clock { text-align: right; min-width: 43px; }

.caller { position: absolute; right: 86px; top: 36px; width: 149px; height: 84px; display: flex; align-items: center; justify-content: center; background: #1b1a1c; color: #fff; font-size: 9px; font-weight: 700; }
.cursor { position: absolute; left: 306px; top: 409px; width: 12px; height: 12px; }
```
